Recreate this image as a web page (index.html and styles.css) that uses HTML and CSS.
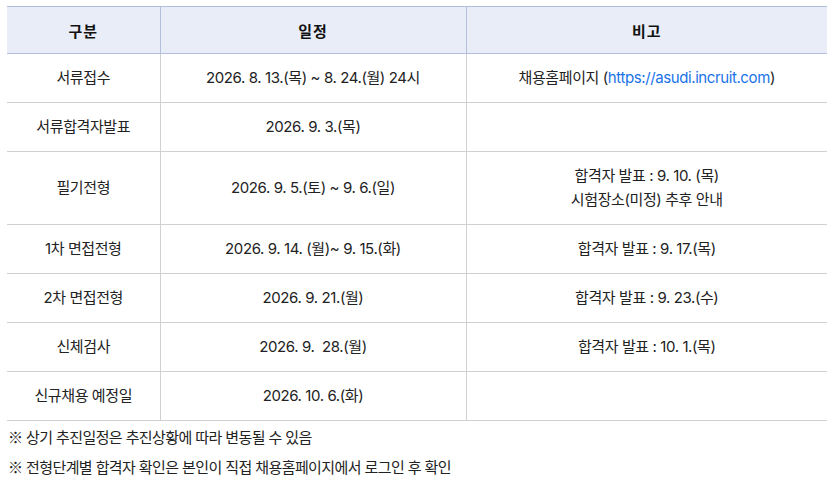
FILE: index.html
```html
<!DOCTYPE html>
<html lang="ko">
<head>
<meta charset="utf-8">
<link rel="stylesheet" href="styles.css">
</head>
<body>
<div class="wrap">
<table class="sched">
  <colgroup><col class="c1"><col class="c2"><col class="c3"></colgroup>
  <thead>
    <tr><th>구분</th><th>일정</th><th>비고</th></tr>
  </thead>
  <tbody>
    <tr><td>서류접수</td><td>2026. 8. 13.(목) ~ 8. 24.(월) 24시</td><td>채용홈페이지 (<a class="link">https://asudi.incruit.com</a>)</td></tr>
    <tr><td>서류합격자발표</td><td>2026. 9. 3.(목)</td><td></td></tr>
    <tr><td>필기전형</td><td>2026. 9. 5.(토) ~ 9. 6.(일)</td><td>합격자 발표 : 9. 10. (목)<br>시험장소(미정) 추후 안내</td></tr>
    <tr><td>1차 면접전형</td><td>2026. 9. 14. (월)~ 9. 15.(화)</td><td>합격자 발표 : 9. 17.(목)</td></tr>
    <tr><td>2차 면접전형</td><td>2026. 9. 21.(월)</td><td>합격자 발표 : 9. 23.(수)</td></tr>
    <tr><td>신체검사</td><td>2026. 9.&nbsp; 28.(월)</td><td>합격자 발표 : 10. 1.(목)</td></tr>
    <tr><td>신규채용 예정일</td><td>2026. 10. 6.(화)</td><td></td></tr>
  </tbody>
</table>
<p class="note"><span class="mark">※</span> 상기 추진일정은 추진상황에 따라 변동될 수 있음</p>
<p class="note"><span class="mark">※</span> 전형단계별 합격자 확인은 본인이 직접 채용홈페이지에서 로그인 후 확인</p>
</div>
</body>
</html>
```
FILE: styles.css
```css
html, body { margin: 0; padding: 0; background: #fff; }
body {
  font-family: Inter, "Noto Sans CJK KR", sans-serif;
  color: #222;
  font-size: 15px;
  letter-spacing: -0.4px;
}
.wrap { padding: 6px 6px 0 7px; }
.sched {
  width: 820px;
  border-collapse: collapse;
  table-layout: fixed;
}
.c1 { width: 153px; }
.c2 { width: 306px; }
.c3 { width: 361px; }
.sched th {
  background: #e8edf8;
  border-top: 1px solid #b3bedd;
  border-bottom: 1px solid #b3bedd;
  height: 46px;
  padding: 0;
  font-weight: 700;
  font-size: 15px;
  color: #111;
  letter-spacing: 1px;
  text-align: center;
}
.sched th + th { border-left: 1px solid #b3bedd; }
.sched td {
  border-bottom: 1px solid #d0d0d0;
  padding: 12px 0;
  line-height: 24px;
  text-align: center;
  vertical-align: middle;
}
.sched td + td { border-left: 1px solid #d0d0d0; }
.link { color: #1a73e8; text-decoration: none; }
.note {
  margin: 0;
  padding-left: 1px;
  font-size: 15px;
  line-height: 29px;
  letter-spacing: -0.6px;
}
.note:first-of-type { margin-top: 1px; }
.mark { font-family: "Noto Sans CJK KR", sans-serif; }
```
